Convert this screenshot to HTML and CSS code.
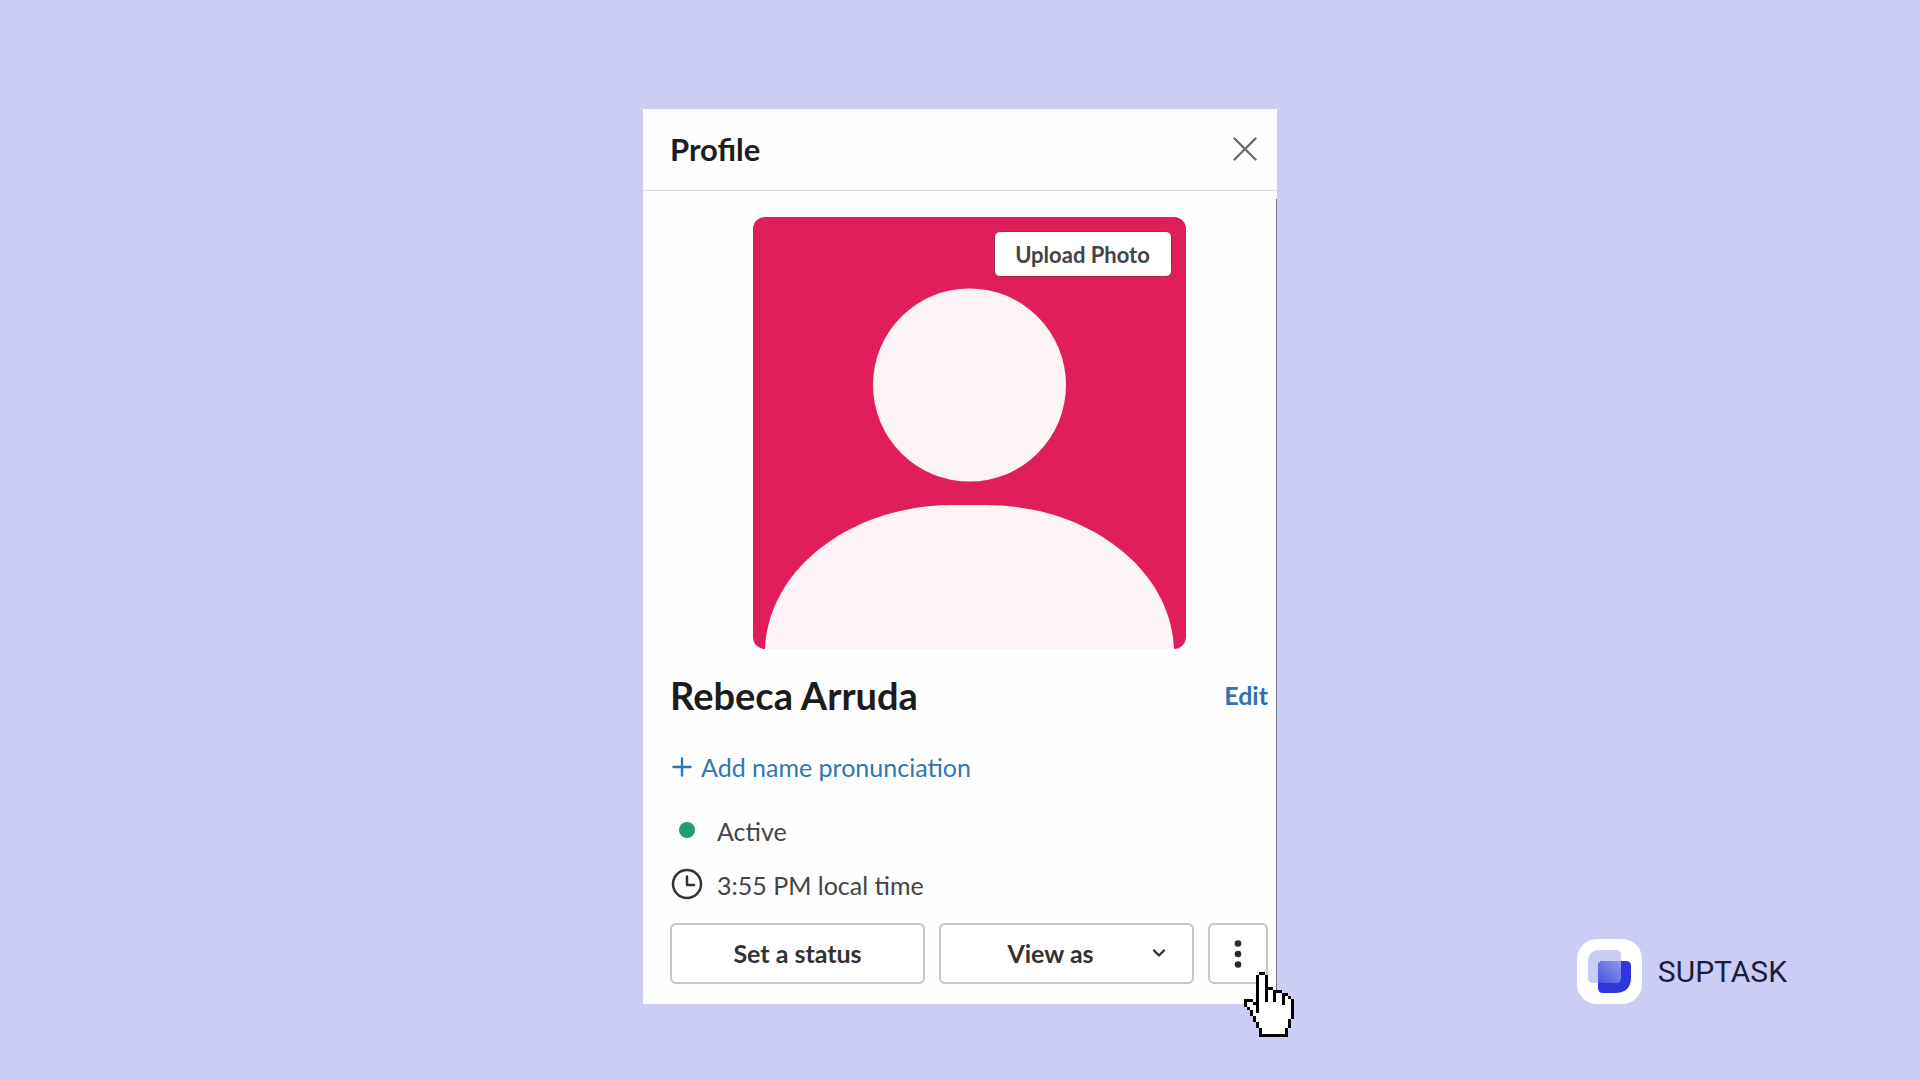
FILE: index.html
```html
<!DOCTYPE html>
<html lang="en">
<head>
<meta charset="utf-8">
<meta name="viewport" content="width=device-width, initial-scale=1">
<title>Profile</title>
<link rel="stylesheet" href="styles.css">
</head>
<body>
<main class="stage">
  <section class="panel" aria-labelledby="panel-title">
    <header class="panel-header">
      <h1 class="panel-title" id="panel-title">Profile</h1>
      <button class="close" type="button" aria-label="Close">
        <svg width="24" height="24" viewBox="0 0 24 24" fill="none" stroke="#6b6b6b" stroke-width="2.4" stroke-linecap="round"><path d="M1.5 1.5l21 21M22.5 1.5l-21 21"/></svg>
      </button>
    </header>
    <div class="panel-body">
      <div class="avatar">
        <svg class="avatar-art" viewBox="0 0 433 432" aria-hidden="true">
          <rect width="433" height="432" fill="#e01e5a"/>
          <circle cx="216.500" cy="168" r="96.500" fill="#fcf3f6"/>
          <path d="M12 432C15 352 98 288 200 288H233C335 288 418 352 421 432Z" fill="#fcf3f6"/>
        </svg>
        <button class="upload" type="button">Upload Photo</button>
      </div>
      <div class="name-row">
        <h2 class="name">Rebeca Arruda</h2>
        <a class="edit" href="#edit">Edit</a>
      </div>
      <a class="pronunciation" href="#pronunciation">
        <svg width="20" height="20" viewBox="0 0 20 20" stroke="currentColor" stroke-width="2.4" stroke-linecap="round"><path d="M10 1.500V18.500M1.500 10H18.500"/></svg>
        Add name pronunciation
      </a>
      <ul class="facts">
        <li class="fact">
          <svg width="34" height="34" viewBox="0 0 34 34"><circle cx="17" cy="16" r="8" fill="#1f9e72"/></svg>
          Active
        </li>
        <li class="fact">
          <svg width="34" height="34" viewBox="0 0 34 34" fill="none" stroke="#333" stroke-width="2.500"><circle cx="17" cy="16" r="14"/><path d="M17 8.500V17H24" stroke-linecap="round" stroke-linejoin="round"/></svg>
          3:55 PM local time
        </li>
      </ul>
      <div class="actions">
        <button class="action" type="button">Set a status</button>
        <button class="action action-menu" type="button">
          <span class="action-label">View as</span>
          <svg width="14" height="10" viewBox="0 0 14 10" fill="none" stroke="#333" stroke-width="2.400" stroke-linecap="round" stroke-linejoin="round"><path d="M2 2.500L7 7.500L12 2.500"/></svg>
        </button>
        <div class="more-wrap">
          <button class="action more" type="button" aria-label="More actions">
            <svg width="8" height="30" viewBox="0 0 8 30" fill="#2b2b2b"><circle cx="4" cy="4.500" r="3.300"/><circle cx="4" cy="15" r="3.300"/><circle cx="4" cy="25.500" r="3.300"/></svg>
          </button>
          <svg class="cursor" viewBox="0 0 17 22" shape-rendering="crispEdges" aria-hidden="true">
            <path fill="#fff" d="M5 1h2v5h3v1h3v1h2v1h1v7h-1v3h-1v2H6v-2H5v-2H4v-2H3v-2H2v-1H1v-2h2v1h1v1h1z"/>
            <path fill="#000" d="M5 0h2v1H5zM4 1h1v13H4zM7 1h1v9H7zM8 5h2v1H8zM10 6h1v4h-1zM11 6h2v1h-2zM13 7h1v4h-1zM14 7h1v1h-1zM15 8h1v1h-1zM16 9h1v7h-1zM15 16h1v3h-1zM14 19h1v3h-1zM5 21h10v1H5zM0 9h3v1H0zM3 10h1v1H3zM0 10h1v2H0zM1 12h1v1H1zM2 13h1v2H2zM3 15h1v2H3zM4 17h1v2H4zM5 19h1v3H5z"/>
          </svg>
        </div>
      </div>
    </div>
  </section>
  <footer class="brand">
    <svg width="65" height="65" viewBox="0 0 65 65" aria-hidden="true">
      <defs>
        <linearGradient id="overlap" x1="0" y1="1" x2="1" y2="0"><stop offset="0" stop-color="#4a55df"/><stop offset="1" stop-color="#8f96ee"/></linearGradient>
      </defs>
      <rect width="65" height="65" rx="20" fill="#fff"/>
      <path d="M23 11H39Q44 11 44 16V39Q44 44 39 44H16Q11 44 11 39V23Q11 11 23 11Z" fill="#c9ccf5"/>
      <path d="M26 22H49Q54 22 54 27V38Q54 54 38 54H26Q21 54 21 49V27Q21 22 26 22Z" fill="#2f36dc"/>
      <path d="M26 22H44V39Q44 44 39 44H21V27Q21 22 26 22Z" fill="url(#overlap)"/>
    </svg>
    <span class="brand-name">SUPTASK</span>
  </footer>
</main>
</body>
</html>
```
FILE: styles.css
```css
* {
  box-sizing: border-box;
}

body {
  margin: 0;
  background: #cccdf5;
  color: #1d1c1d;
  font-family: Lato, "Liberation Sans", sans-serif;
}

button {
  font-family: inherit;
  cursor: pointer;
}

svg {
  display: block;
  flex: none;
}

.stage {
  display: grid;
  grid-template-columns: 1fr minmax(0, 634px) 1fr;
  align-items: end;
  align-content: end;
  min-height: 100vh;
  padding: 76px 0;
}

.panel {
  grid-column: 2;
  background: #fefefe;
}

.panel-header {
  display: flex;
  align-items: center;
  justify-content: space-between;
  height: 82px;
  padding: 0 20px 2px 27px;
  border-bottom: 1px solid #dcdedf;
}

.panel-title {
  margin: 0;
  font-size: 31px;
  line-height: 40px;
  font-weight: 700;
}

.close {
  padding: 0;
  border: 0;
  background: none;
}

.panel-body {
  margin-top: 8px;
  padding: 18px 8px 20px 27px;
  border-right: 1px solid #73757d;
}

.avatar {
  position: relative;
  width: 433px;
  max-width: 100%;
  margin: 0 auto;
}

.avatar-art {
  width: 100%;
  border-radius: 12px;
}

.upload {
  position: absolute;
  top: 14px;
  right: 14px;
  width: 178px;
  height: 46px;
  padding: 0;
  border: 1px solid #a32a50;
  border-radius: 6px;
  background: #fff;
  color: #444;
  font-size: 22px;
  font-weight: 700;
}

.name-row {
  display: flex;
  align-items: center;
  justify-content: space-between;
  margin-top: 20px;
}

.name {
  margin: 0;
  font-size: 38px;
  line-height: 52px;
  font-weight: 700;
}

.edit {
  color: #2f73ad;
  font-size: 25px;
  font-weight: 700;
  text-decoration: none;
}

.pronunciation {
  display: flex;
  align-items: center;
  gap: 9px;
  margin-top: 28px;
  padding-left: 2px;
  color: #2f76b5;
  font-size: 25px;
  line-height: 36px;
  text-decoration: none;
}

.facts {
  display: grid;
  gap: 18px;
  margin: 28px 0 0;
  padding: 0;
  list-style: none;
}

.fact {
  display: flex;
  align-items: center;
  gap: 13px;
  color: #444;
  font-size: 25px;
  line-height: 36px;
}

.actions {
  display: grid;
  grid-template-columns: 1fr 1fr 60px;
  gap: 14px;
  margin-top: 20px;
}

.action {
  height: 61px;
  padding: 0 0 2px;
  border: 2px solid #c6c6c6;
  border-radius: 6px;
  background: #fff;
  color: #333;
  font-size: 25px;
  font-weight: 700;
}

.action-menu {
  display: flex;
  align-items: center;
  padding-left: 8px;
  padding-right: 26px;
}

.action-label {
  flex: 1;
}

.more-wrap {
  position: relative;
}

.more {
  display: flex;
  align-items: center;
  justify-content: center;
  width: 100%;
  padding: 0;
}

.cursor {
  position: absolute;
  top: 49px;
  left: 36px;
  width: 50px;
  height: 65px;
}

.brand {
  grid-column: 3;
  display: flex;
  align-items: center;
  justify-content: flex-end;
  gap: 16px;
  padding-right: 133px;
}

.brand-name {
  color: #1d1d3a;
  font-family: Roboto, "Liberation Sans", sans-serif;
  font-size: 30px;
}
```
